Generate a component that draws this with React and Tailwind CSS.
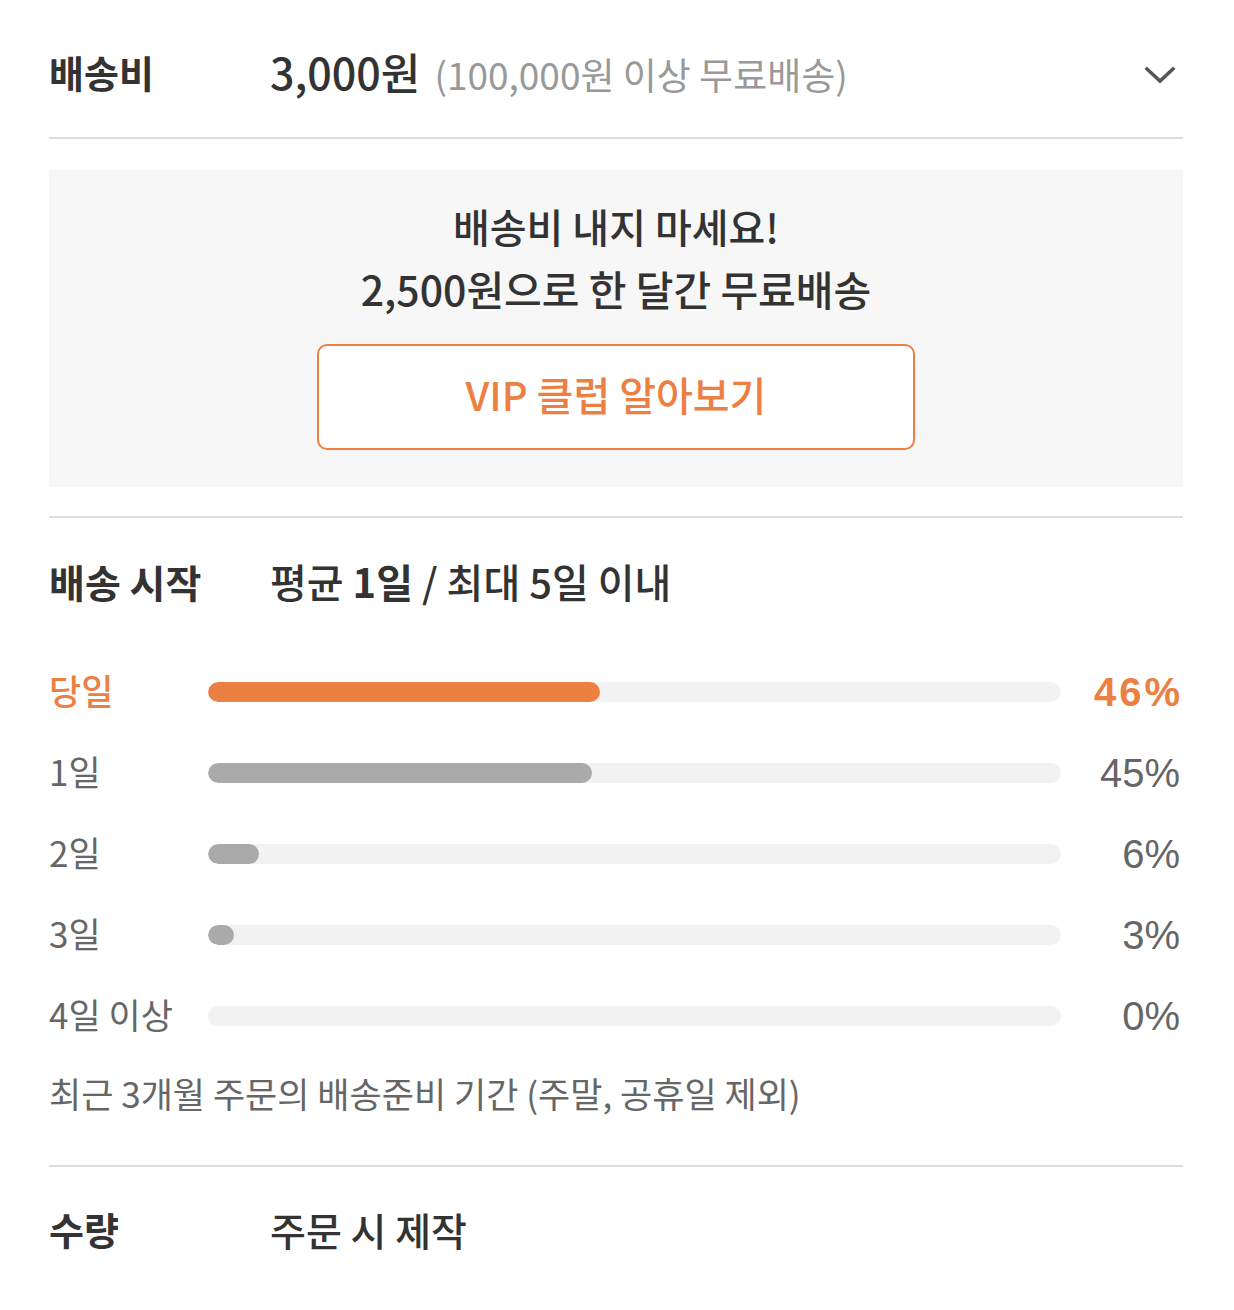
import React from "react";

const rows = [
  { label: "당일", pct: 46, active: true },
  { label: "1일", pct: 45 },
  { label: "2일", pct: 6 },
  { label: "3일", pct: 3 },
  { label: "4일 이상", pct: 0 },
];

export default function App() {
  return (
    <div
      className="w-[1234px] min-h-[1310px] bg-white pl-[49px] pr-[51px] text-[#333]"
      style={{ fontFamily: '"Noto Sans CJK KR", "Liberation Sans", sans-serif' }}
    >
      {/* 배송비 */}
      <div className="flex items-center h-[139px] pt-[7px] border-b-2 border-[#dddddd]">
        <div className="w-[221px] text-[38px] leading-[50px] font-bold">배송비</div>
        <div className="flex-1 flex items-baseline leading-[50px]">
          <span className="text-[43px] font-medium">3,000원</span>
          <span className="ml-[14px] text-[37px] text-[#999]">(100,000원 이상 무료배송)</span>
        </div>
        <svg width="34" height="22" viewBox="0 0 34 22" className="mr-[6px] mt-[6px]">
          <path d="M4 5 L17 17 L30 5" fill="none" stroke="#555" strokeWidth="3.5" strokeLinecap="square" />
        </svg>
      </div>

      {/* VIP box */}
      <div className="mt-[31px] bg-[#f7f7f7] pt-[25px] pb-[37px] flex flex-col items-center">
        <div className="text-[40px] leading-[62px] font-medium text-[#333]">배송비 내지 마세요!</div>
        <div className="text-[41px] leading-[62px] font-medium text-[#333]">2,500원으로 한 달간 무료배송</div>
        <button className="mt-[25px] w-[598px] h-[106px] rounded-[10px] border-2 border-[#ec8043] bg-white text-[#ec8043] text-[40px] leading-[50px] font-medium">
          <span className="relative top-[-3px]">VIP 클럽 알아보기</span>
        </button>
      </div>

      <div className="mt-[29px] border-b-2 border-[#dddddd]" />

      {/* 배송 시작 */}
      <div className="flex items-center pt-[38px] leading-[50px]">
        <div className="w-[221px] text-[39px] font-bold">배송 시작</div>
        <div className="text-[40px] font-medium">
          평균 <span className="font-bold">1일</span> / 최대 5일 이내
        </div>
      </div>

      <div className="mt-[45px] flex flex-col">
        {rows.map((r) => (
          <div key={r.label} className="h-[81px] flex items-center">
            <div
              className={
                r.active
                  ? "w-[159px] text-[35px] leading-[50px] font-medium text-[#ec8043] relative top-[-2px]"
                  : "w-[159px] text-[35px] leading-[50px] text-[#666] relative top-[-2px]"
              }
            >
              {r.label}
            </div>
            <div className="w-[853px] h-[20px] rounded-full bg-[#f2f2f2] overflow-hidden">
              <div
                className={r.active ? "h-full rounded-full bg-[#ec8043]" : "h-full rounded-full bg-[#aaaaaa]"}
                style={{ width: `${r.pct}%`, minWidth: r.pct > 0 ? "26px" : 0 }}
              />
            </div>
            <div
              className={
                r.active
                  ? "flex-1 text-right text-[40px] leading-[50px] font-bold tracking-[3px] text-[#ec8043]"
                  : "flex-1 text-right pr-[3px] text-[40px] leading-[50px] text-[#666]"
              }
              style={{ fontFamily: '"Liberation Sans", sans-serif' }}
            >
              {r.pct}%
            </div>
          </div>
        ))}
      </div>

      <div className="mt-[12px] leading-[50px] text-[35px] text-[#666]">
        최근 3개월 주문의 배송준비 기간 (주말, 공휴일 제외)
      </div>

      <div className="mt-[47px] border-b-2 border-[#dddddd]" />

      {/* 수량 */}
      <div className="flex items-center pt-[37px] leading-[50px]">
        <div className="w-[221px] text-[38px] font-bold">수량</div>
        <div className="text-[39px] font-medium">주문 시 제작</div>
      </div>
    </div>
  );
}
